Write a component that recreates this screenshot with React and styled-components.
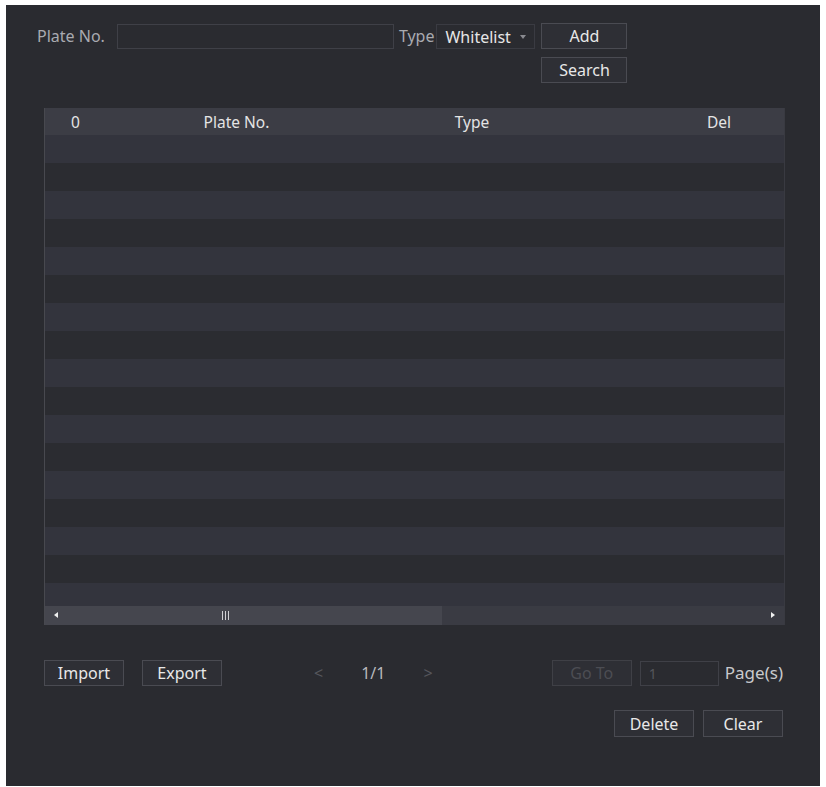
import styled, { createGlobalStyle } from 'styled-components';

const GlobalStyle = createGlobalStyle`
  body {
    margin: 0;
    background: #ffffff;
    font-family: "Noto Sans", "Open Sans", sans-serif;
  }
`

const Panel = styled.div`
  box-sizing: border-box;
  width: 814px;
  height: 781px;
  margin: 5px 0 0 6px;
  background: #2a2b30;
  padding: 18px 37px 0 38px;
  display: flex;
  flex-direction: column;
  color: #dcdcdc;
  font-size: 16px;
`

const Toolbar = styled.div`
  display: flex;
  align-items: flex-start;
  margin-left: -7px;
  height: 85px;
`

const Label = styled.span`
  color: ${p => p.dim ? '#a9aab0' : '#c8c9cc'};
  font-size: ${p => p.size || 16}px;
  line-height: 26px;
  margin-right: ${p => p.gap || 0}px;
`

const TextInput = styled.div`
  box-sizing: border-box;
  width: ${p => p.w}px;
  height: 25px;
  margin-top: 1px;
  border: 1px solid #3f4047;
  background: #2a2b30;
  margin-right: ${p => p.gap || 0}px;
  color: #55565c;
  font-size: 14px;
  line-height: 23px;
  padding-left: 8px;
`

const Select = styled.div`
  box-sizing: border-box;
  width: 99px;
  height: 25px;
  margin: 1px 6px 0 2px;
  border: 1px solid #3a3b42;
  display: flex;
  align-items: center;
  padding-left: 8px;
  gap: 9px;
  color: #e6e6e6;
  font-size: 16px;
`

const Caret = styled.span`
  width: 0;
  height: 0;
  border-left: 3px solid transparent;
  border-right: 3px solid transparent;
  border-top: 4px solid #8a8b90;
`

const ButtonStack = styled.div`
  display: flex;
  flex-direction: column;
  gap: 8px;
`

const Button = styled.div`
  box-sizing: border-box;
  width: ${p => p.w || 80}px;
  height: ${p => p.h || 26}px;
  border: 1px solid ${p => p.disabled ? '#3f4046' : '#4a4b52'};
  background: #2e2f35;
  display: flex;
  align-items: center;
  justify-content: center;
  color: ${p => p.disabled ? '#4c4d53' : '#e8e8e8'};
  font-size: 16px;
`

const Table = styled.div`
  width: 739px;
  border-left: 1px solid #48494f;
  border-right: 1px solid #393a41;
  overflow: hidden;
`

const HeaderRow = styled.div`
  display: grid;
  grid-template-columns: 62px 262px 208px 284px;
  width: 816px;
  height: 27px;
  background: #3c3d45;
  align-items: center;
  font-size: 15.5px;
  color: #e4e4e4;
`

const Cell = styled.div`
  text-align: center;
  margin-left: ${p => p.shift || 0}px;
`

const Body = styled.div`
  height: 471px;
  overflow: hidden;
`

const Row = styled.div`
  height: 28px;
  background: ${p => p.odd ? '#2b2c31' : '#33343d'};
`

const Scrollbar = styled.div`
  height: 19px;
  display: flex;
  align-items: center;
  background: #3a3b43;
  position: relative;
`

const Thumb = styled.div`
  width: 397px;
  height: 100%;
  background: #45464e;
  display: flex;
  align-items: center;
  justify-content: center;
`

const Grip = styled.div`
  display: flex;
  gap: 2px;
  margin-left: -36px;
  span {
    width: 1px;
    height: 9px;
    background: #d0d0d4;
  }
`

const Arrow = styled.span`
  position: absolute;
  top: 6px;
  ${p => p.right ? 'right: 9px;' : 'left: 9px;'}
  width: 0;
  height: 0;
  border-top: 3px solid transparent;
  border-bottom: 3px solid transparent;
  ${p => p.right ? 'border-left: 4px solid #f0f0f0;' : 'border-right: 4px solid #f0f0f0;'}
`

const Footer = styled.div`
  margin-top: 35px;
  display: flex;
  align-items: center;
  width: 739px;
`

const Pager = styled.div`
  display: flex;
  align-items: center;
  margin-left: 92px;
  gap: 38px;
  color: #b8b9bc;
  font-size: 16px;
`

const PagerArrow = styled.span`
  color: #55565c;
  font-size: 16px;
`

const Spacer = styled.div`
  flex: 1;
`

const Actions = styled.div`
  margin-top: 24px;
  display: flex;
  justify-content: flex-end;
  gap: 9px;
  width: 739px;
`

function App() {
  const rows = Array.from({ length: 17 }, (_, i) => i);
  return (
    <>
      <GlobalStyle />
      <Panel>
        <Toolbar>
          <Label dim gap={12}>Plate No.</Label>
          <TextInput w={277} gap={5} />
          <Label dim>Type</Label>
          <Select>Whitelist <Caret /></Select>
          <ButtonStack>
            <Button w={86}>Add</Button>
            <Button w={86}>Search</Button>
          </ButtonStack>
        </Toolbar>

        <Table>
          <HeaderRow>
            <Cell shift={-1}>0</Cell>
            <Cell shift={-3}>Plate No.</Cell>
            <Cell shift={-2}>Type</Cell>
            <Cell>Del</Cell>
          </HeaderRow>
          <Body>
            {rows.map(i => <Row key={i} odd={i % 2 === 1} />)}
          </Body>
          <Scrollbar>
            <Thumb>
              <Grip><span /><span /><span /></Grip>
            </Thumb>
            <Arrow />
            <Arrow right />
          </Scrollbar>
        </Table>

        <Footer>
          <Button w={80}>Import</Button>
          <Button w={80} style={{ marginLeft: 18 }}>Export</Button>
          <Pager>
            <PagerArrow>&lt;</PagerArrow>
            <span>1/1</span>
            <PagerArrow>&gt;</PagerArrow>
          </Pager>
          <Spacer />
          <Button w={80} disabled>Go To</Button>
          <TextInput w={79} style={{ margin: '0 6px 0 8px' }}>1</TextInput>
          <Label size={17}>Page(s)</Label>
        </Footer>

        <Actions>
          <Button w={80} h={27}>Delete</Button>
          <Button w={80} h={27}>Clear</Button>
        </Actions>
      </Panel>
    </>
  );
}

export default App;
